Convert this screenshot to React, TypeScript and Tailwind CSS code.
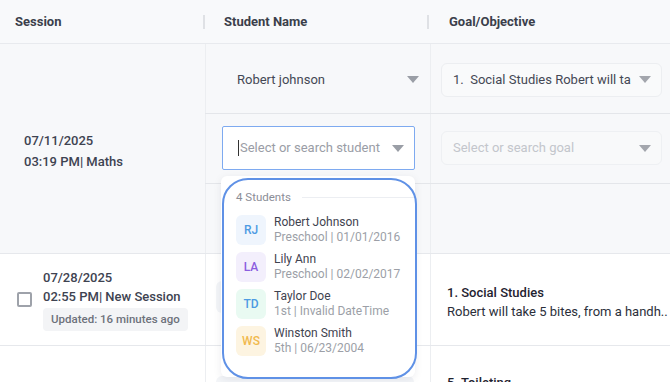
import { useState } from "react";

type Student = {
  initials: string;
  name: string;
  meta: string;
  tone: string;
};

const students: Student[] = [
  { initials: "RJ", name: "Robert Johnson", meta: "Preschool | 01/01/2016", tone: "bg-[#eff5fd] text-[#4d9be3]" },
  { initials: "LA", name: "Lily Ann", meta: "Preschool | 02/02/2017", tone: "bg-[#f3effc] text-[#8b5ddf]" },
  { initials: "TD", name: "Taylor Doe", meta: "1st | Invalid DateTime", tone: "bg-[#e9faf2] text-[#4d9be3]" },
  { initials: "WS", name: "Winston Smith", meta: "5th | 06/23/2004", tone: "bg-[#fdf4e1] text-[#f1b94e]" },
];

const Caret = ({ light }: { light?: boolean }) => (
  <svg width="12" height="7" viewBox="0 0 12 7" className="shrink-0">
    <path d="M0 0h12L6 7z" fill={light ? "#a3a6ad" : "#9a9ea6"} />
  </svg>
);

const StudentMenu = () => (
  <div className="absolute left-[221px] top-[176px] w-[194px] h-[201px] bg-white rounded-md shadow-[0_2px_8px_rgba(20,30,50,0.08)]">
    <div className="flex items-center gap-[11px] pl-[15px] pt-[13px]">
      <span className="text-[11.5px] text-[#8b8e97]">4 Students</span>
      <div className="flex-1 h-px bg-[#eceef2]" />
    </div>
    <div className="flex flex-col gap-[7px] mt-[9px] pl-[15px]">
      {students.map((s) => (
        <div key={s.initials} className="flex items-center gap-[8px]">
          <div
            className={`w-[30px] h-[30px] rounded-md flex items-center justify-center text-[12px] font-medium ${s.tone}`}
          >
            {s.initials}
          </div>
          <div className="leading-[15px] whitespace-nowrap">
            <p className="text-[12px] text-[#3f4350]">{s.name}</p>
            <p className="text-[12px] text-[#9c9fa7]">{s.meta}</p>
          </div>
        </div>
      ))}
    </div>
    {/* highlight ring */}
    <div className="absolute left-[1px] top-[2px] w-[195px] h-[201px] rounded-[26px] border-2 border-[#5f91e6] pointer-events-none" />
  </div>
);

export default function App() {
  const [checked, setChecked] = useState(false);

  return (
    <div
      className="relative w-[670px] h-[382px] overflow-hidden bg-white text-[13px]"
      style={{ fontFamily: "Roboto, 'Liberation Sans', sans-serif" }}
    >
      {/* Header */}
      <div className="flex h-[44px] bg-[#f8f9fb] border-b border-[#e8eaee] font-bold text-[#3b3f4b] pt-[1px]">
        <div className="w-[205px] shrink-0 flex items-center justify-between pl-[15px]">
          <span>Session</span>
          <span className="w-[2px] h-[14px] bg-[#dfe1e5]" />
        </div>
        <div className="w-[225px] shrink-0 flex items-center justify-between pl-[19px]">
          <span>Student Name</span>
          <span className="w-[2px] h-[14px] bg-[#dfe1e5] mr-[1px]" />
        </div>
        <div className="flex-1 min-w-0 flex items-center pl-[19px]">
          <span>Goal/Objective</span>
        </div>
      </div>

      {/* Row 1 (editing) */}
      <div className="flex h-[210px] bg-[#f7f8fa] border-b border-[#e6e8ec]">
        <div className="w-[205px] shrink-0 flex flex-col justify-center pl-[24px] pt-[5px] font-medium text-[#3e4351] leading-[21px]">
          <p>07/11/2025</p>
          <p>03:19 PM| Maths</p>
        </div>
        <div className="flex-1 min-w-0 flex flex-col">
          <div className="flex h-[70px] border-b border-[#e4e6ea]">
            <div className="w-[225px] shrink-0 border-l border-[#eceef1] flex items-center justify-between pl-[31px] pr-[11px] pt-[2px] text-[#444855]">
              <span>Robert johnson</span>
              <Caret />
            </div>
            <div className="flex-1 min-w-0 border-l border-[#eceef1] flex items-center pl-[10px] pt-[2px]">
              <div className="w-[221px] h-[34px] rounded-md border border-[#eceef1] bg-[#f9fafb] flex items-center justify-between pl-[11px] pr-[10px] text-[#444855]">
                <span className="whitespace-nowrap overflow-hidden">1.&nbsp; Social Studies Robert will ta</span>
                <Caret light />
              </div>
            </div>
          </div>
          <div className="flex h-[70px] border-b border-[#e4e6ea]">
            <div className="w-[225px] shrink-0 border-l border-[#eceef1] flex items-center pl-[16px] pb-[1px]">
              <div className="w-[193px] h-[44px] bg-white border border-[#7eaaf0] rounded-[2px] flex items-center justify-between pl-[15px] pr-[10px] text-[#9a9da6]">
                <span className="flex items-center whitespace-nowrap">
                  <span className="w-px h-[16px] bg-[#333] mr-[1px]" />
                  Select or search student
                </span>
                <Caret />
              </div>
            </div>
            <div className="flex-1 min-w-0 border-l border-[#eceef1] flex items-center pl-[10px] pb-[1px]">
              <div className="w-[221px] h-[34px] rounded-md border border-[#eef0f3] bg-[#f8f9fa] flex items-center justify-between pl-[11px] pr-[10px] text-[#c3c6cc]">
                <span>Select or search goal</span>
                <Caret light />
              </div>
            </div>
          </div>
          <div className="flex flex-1">
            <div className="w-[225px] shrink-0 border-l border-[#eceef1]" />
            <div className="flex-1 border-l border-[#eceef1]" />
          </div>
        </div>
      </div>

      {/* Row 2 */}
      <div className="flex h-[92px] border-b border-[#e6e8ec]">
        <div className="w-[205px] shrink-0 flex items-center pl-[17px] gap-[11px]">
          <button
            onClick={() => setChecked(!checked)}
            className="w-[15px] h-[15px] rounded-[2px] border-2 border-[#9ea2aa] bg-white"
          />
          <div className="font-medium text-[#3e4351] leading-[19px] whitespace-nowrap">
            <p>07/28/2025</p>
            <p>02:55 PM| New Session</p>
            <p className="mt-[2px] w-fit px-[8px] py-[4px] leading-[15px] rounded bg-[#f3f4f6] text-[11.5px] text-[#6d717b]">
              Updated: 16 minutes ago
            </p>
          </div>
        </div>
        <div className="w-[225px] shrink-0 border-l border-[#eceef1] flex items-center pl-[10px] pb-[6px]">
          <div className="w-[198px] h-[32px] rounded-md bg-[#f3f5f8]" />
        </div>
        <div className="flex-1 min-w-0 border-l border-[#eceef1] flex flex-col justify-center pl-[16px] pt-[4px] leading-[19px] whitespace-nowrap">
          <p className="font-medium text-[#1f2330]">1. Social Studies</p>
          <p className="text-[#2b2f3a]">Robert will take 5 bites, from a handh..</p>
        </div>
      </div>

      {/* Row 3 */}
      <div className="flex h-[60px]">
        <div className="w-[205px] shrink-0" />
        <div className="w-[225px] shrink-0 border-l border-[#eceef1] pl-[10px] pt-[30px]">
          <div className="w-[198px] h-[32px] rounded-md bg-[#f3f5f8]" />
        </div>
        <div className="flex-1 min-w-0 border-l border-[#eceef1] pl-[16px] pt-[27px] font-medium text-[#1f2330]">
          5. Toileting
        </div>
      </div>

      <StudentMenu />
    </div>
  );
}
